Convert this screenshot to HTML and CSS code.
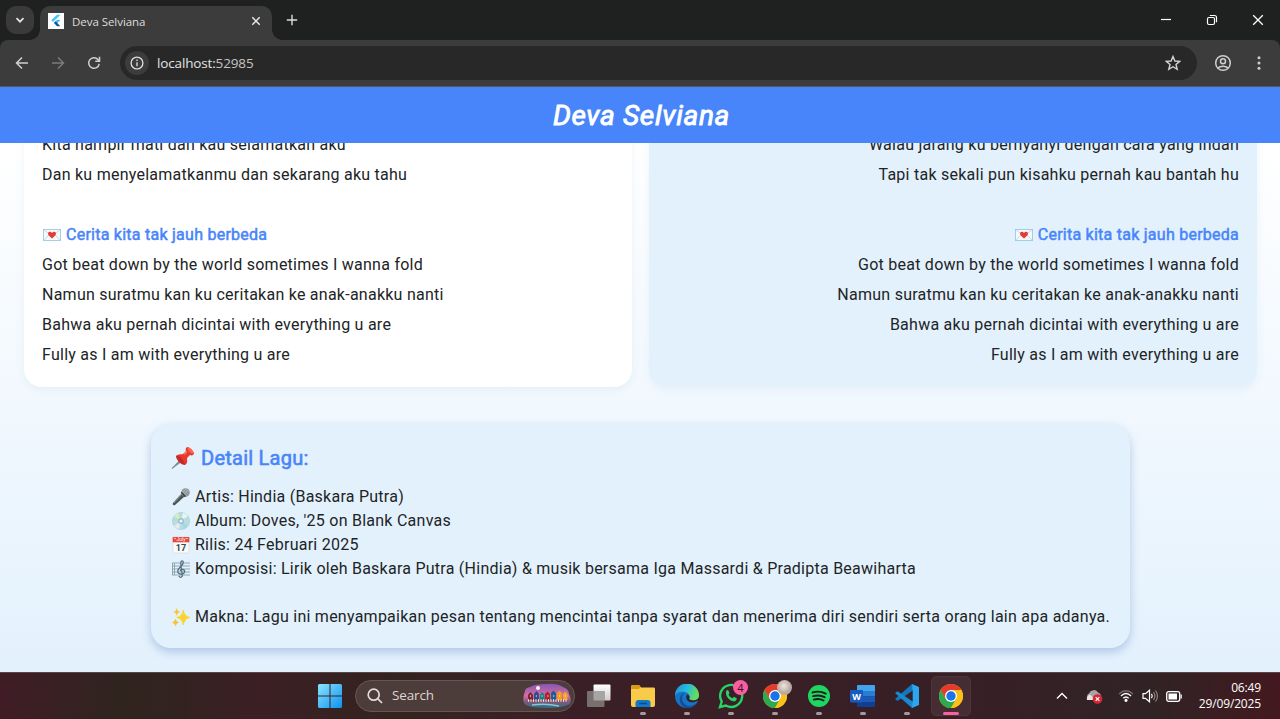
FILE: index.html
```html
<!DOCTYPE html>
<html lang="id">
<head>
<meta charset="utf-8">
<title>Deva Selviana</title>
<link rel="stylesheet" href="styles.css">
</head>
<body>
<svg class="defs" width="0" height="0" aria-hidden="true">
  <symbol id="chrome" viewBox="0 0 24 24">
    <circle cx="12" cy="12" r="12" fill="#fbc116"/>
    <path d="M1.600 6A12 12 0 0 0 12 24L17.200 15L12 12L6.800 15z" fill="#2da94f"/>
    <path d="M12 6H22.400A12 12 0 0 1 12 24L17.200 15z" fill="#fbc116"/>
    <path d="M1.600 6L6.800 15L12 12V6H22.400A12 12 0 0 0 1.600 6z" fill="#e33b2e"/>
    <circle cx="12" cy="12" r="6" fill="#fff"/>
    <circle cx="12" cy="12" r="4.700" fill="#1a73e8"/>
  </symbol>
  <symbol id="letter" viewBox="0 0 18 12">
    <rect x=".4" y=".4" width="17.200" height="11.200" fill="#f5f9fb" stroke="#8fc5e0" stroke-width=".8"/>
    <path d="M.5 .5L9 7l8.500-6.500M.5 11.500L6.500 5.500M17.500 11.500L11.500 5.500" fill="none" stroke="#b5cdd8" stroke-width=".7"/>
    <path d="M9 9.500C6.500 7.500 5 6.200 5 4.600C5 2.600 7.800 2 9 4C10.200 2 13 2.600 13 4.600C13 6.200 11.500 7.500 9 9.500z" fill="#e53b35"/>
  </symbol>
</svg>
<div class="window">
  <header class="tabstrip">
    <button class="tab-search"><svg width="12" height="12" viewBox="0 0 12 12"><path d="M2.500 4.200L6 7.700L9.500 4.200" fill="none" stroke="#e3e3e3" stroke-width="1.700"/></svg></button>
    <div class="tab">
      <svg class="favicon" width="16" height="16" viewBox="0 0 16 16"><rect width="16" height="16" fill="#fff"/><path d="M9 1.700h3.500L5 9L3.300 7.300z" fill="#45c5f8"/><path d="M9 7h3.500L9.700 9.800L8 11.500L6 9.800z" fill="#45b8f5"/><path d="M6 9.900l1.700-1.600l4.600 5H9z" fill="#0b5a9d"/></svg>
      <span class="tab-title">Deva Selviana</span>
      <svg class="tab-close" width="10" height="10" viewBox="0 0 10 10"><path d="M1.300 1.300l7.400 7.400M8.700 1.300L1.300 8.700" stroke="#e8e8e8" stroke-width="1.500"/></svg>
    </div>
    <svg class="new-tab" width="12" height="12" viewBox="0 0 12 12"><path d="M6 .8v10.400M.8 6h10.400" stroke="#dcdcdc" stroke-width="1.400"/></svg>
    <div class="controls">
      <svg width="12" height="12" viewBox="0 0 12 12"><path d="M1 5.500h10" stroke="#fff" stroke-width="1.200"/></svg>
      <svg width="12" height="12" viewBox="0 0 12 12"><rect x="1.500" y="3.500" width="7" height="7" rx="1.500" fill="none" stroke="#fff" stroke-width="1.200"/><path d="M3.800 1.500H8.500a2 2 0 0 1 2 2V8.200" fill="none" stroke="#fff" stroke-width="1.200"/></svg>
      <svg width="12" height="12" viewBox="0 0 12 12"><path d="M1.200 1.200l9.600 9.600M10.800 1.200L1.200 10.800" stroke="#fff" stroke-width="1.300"/></svg>
    </div>
  </header>
  <nav class="toolbar">
    <svg width="14" height="14" viewBox="0 0 14 14" fill="none" stroke="#d0d0d0" stroke-width="1.500"><path d="M13 7H2M7 1.500L1.500 7L7 12.500"/></svg>
    <svg width="14" height="14" viewBox="0 0 14 14" fill="none" stroke="#7b7b7b" stroke-width="1.500"><path d="M1 7h11M7 1.500L12.500 7L7 12.500"/></svg>
    <svg width="14" height="14" viewBox="0 0 14 14" fill="none" stroke="#d0d0d0" stroke-width="1.500"><path d="M12.200 7.800A5.300 5.300 0 1 1 11 3.500L12.500 5M12.500 .8V5.200H8.200"/></svg>
    <div class="omnibox">
      <span class="info"><svg width="14" height="14" viewBox="0 0 14 14"><circle cx="7" cy="7" r="5.900" fill="none" stroke="#e0e0e0" stroke-width="1.300"/><path d="M7 6.200V10.200M7 3.600V5" stroke="#e0e0e0" stroke-width="1.300"/></svg></span>
      <span class="url">localhost:<span class="port">52985</span></span>
      <svg class="star" width="16" height="16" viewBox="0 0 16 16"><path d="M8 1.500L9.900 6L14.800 6.300L11 9.500L12.200 14.300L8 11.700L3.800 14.300L5 9.500L1.200 6.300L6.100 6z" fill="none" stroke="#d5d5d5" stroke-width="1.400"/></svg>
    </div>
    <svg class="profile" width="18" height="18" viewBox="0 0 18 18" fill="none" stroke="#cfcfcf" stroke-width="1.500"><circle cx="9" cy="9" r="7.300"/><circle cx="9" cy="7.300" r="2.500"/><path d="M4 14C6.300 11.500 11.700 11.500 14 14"/></svg>
    <svg class="kebab" width="4" height="14" viewBox="0 0 4 14" fill="#cfcfcf"><circle cx="2" cy="1.700" r="1.500"/><circle cx="2" cy="7" r="1.500"/><circle cx="2" cy="12.300" r="1.500"/></svg>
  </nav>
  <div class="appbar"><h1>Deva Selviana</h1></div>
  <main class="content">
    <div class="lyrics">
      <section class="card">
        <p>Kita hampir mati dan kau selamatkan aku</p>
        <p>Dan ku menyelamatkanmu dan sekarang aku tahu</p>
        <h2><svg width="18" height="12"><use href="#letter"/></svg><span>Cerita kita tak jauh berbeda</span></h2>
        <p>Got beat down by the world sometimes I wanna fold</p>
        <p>Namun suratmu kan ku ceritakan ke anak-anakku nanti</p>
        <p>Bahwa aku pernah dicintai with everything u are</p>
        <p>Fully as I am with everything u are</p>
      </section>
      <section class="card card-right">
        <p>Walau jarang ku bernyanyi dengan cara yang indah</p>
        <p>Tapi tak sekali pun kisahku pernah kau bantah hu</p>
        <h2><svg width="18" height="12"><use href="#letter"/></svg><span>Cerita kita tak jauh berbeda</span></h2>
        <p>Got beat down by the world sometimes I wanna fold</p>
        <p>Namun suratmu kan ku ceritakan ke anak-anakku nanti</p>
        <p>Bahwa aku pernah dicintai with everything u are</p>
        <p>Fully as I am with everything u are</p>
      </section>
    </div>
    <section class="detail">
      <h3><svg width="24" height="24" viewBox="0 0 24 24"><path d="M9 14L1 22.500L10.500 15.500z" fill="#78909c" stroke="#78909c"/><path d="M5 10C8 7.500 10 8.500 12 8L15 5C14 3 15 1 17 1L23 7C23 9 21 10 19 9L16 12C16 15 17 17 14 19z" fill="#e8392c"/><path d="M5 10C8 9 13 13 14 19C10 19 5 14 5 10z" fill="#c62828"/><path d="M17 1C15 3 20 9 23 7C22 4 20 2 17 1z" fill="#ff6450"/><path d="M13 8.500L16 5.500" stroke="#ff7a66" stroke-width="1.500"/></svg><span>Detail Lagu:</span></h3>
      <p><svg width="20" height="20" viewBox="0 0 20 20"><path d="M10.500 6.500L13.500 9.500L4 18C2.500 19 1 17.500 2 16z" fill="#4b5357"/><path d="M11 7L3 16" stroke="#89949a"/><circle cx="14.500" cy="5.500" r="4.300" fill="#89949a"/><path d="M12 2.500L18 8M14 1.500L18.500 5.500M11 4L16 9.500M12 8L17.500 2.500M11 6L15.500 1.500" stroke="#bec7cb" stroke-width=".5"/><path d="M10.300 5.300L14.500 9.800" stroke="#313a3e" stroke-width="1.300"/></svg><span>Artis: Hindia (Baskara Putra)</span></p>
      <p><svg width="20" height="20" viewBox="0 0 20 20"><circle cx="10" cy="10" r="8.600" fill="#b7dce2" stroke="#9ac2cb" stroke-width=".5"/><path d="M10 10L3 5A8.600 8.600 0 0 1 7 2z" fill="#d9efb6"/><path d="M10 10L12 1.700A8.600 8.600 0 0 1 17 5z" fill="#e6f4f5"/><path d="M10 10L17 15A8.600 8.600 0 0 1 13 18z" fill="#a2d7e9"/><path d="M10 10L8 18A8.600 8.600 0 0 1 3 15z" fill="#e4ecec"/><circle cx="10" cy="10" r="3" fill="#9cbfca"/><circle cx="10" cy="10" r="1.500" fill="#edf7fb"/></svg><span>Album: Doves, '25 on Blank Canvas</span></p>
      <p><svg width="20" height="20" viewBox="0 0 20 20"><rect x="2" y="2" width="16" height="16" rx=".8" fill="#fafafa" stroke="#d2d7da" stroke-width=".6"/><path d="M1.700 2h16.600v5.300H1.700z" fill="#e8463d"/><circle cx="4" cy="3.500" r=".7" fill="#fff"/><circle cx="16" cy="3.500" r=".7" fill="#fff"/><text class="cal-month" x="10" y="6.300">July</text><text class="cal-day" x="10" y="15.800">17</text></svg><span>Rilis: 24 Februari 2025</span></p>
      <p><svg width="20" height="20" viewBox="0 0 20 20"><path d="M1 4h18M1 7h18M1 10h18M1 13h18M1 16h18M1.500 4v12M3.500 4v12" stroke="#86a0ad" stroke-width=".9" fill="none"/><path d="M8 16.800C8.500 19.200 11.800 18.500 11.300 16L9.700 4.500C9.500 1.500 12.300 1 12.300 3.500C12.300 7 6.800 8.200 6.800 12.300C6.800 16 13.600 16 13.600 12.500C13.600 9.700 9.500 9.700 9.300 12.300" stroke="#506e7c" stroke-width="1.200" fill="none"/></svg><span>Komposisi: Lirik oleh Baskara Putra (Hindia) &amp; musik bersama Iga Massardi &amp; Pradipta Beawiharta</span></p>
      <p class="meaning"><svg width="20" height="20" viewBox="0 0 20 20"><path d="M12.300 3Q13.200 9.500 19 10.500Q13.200 11.500 12.300 18Q11.400 11.500 5.600 10.500Q11.400 9.500 12.300 3z" fill="#fdd332" stroke="#fdd332" stroke-width=".8"/><path d="M5.700 1.500Q6 4.600 9 5Q6 5.400 5.700 8.500Q5.400 5.400 2.500 5Q5.400 4.600 5.700 1.500zM4.500 12Q5 15 7.500 15.500Q5 16 4.500 19Q4 16 1.500 15.500Q4 15 4.500 12z" fill="#f9c22b" stroke="#f9c22b" stroke-width=".4"/></svg><span>Makna: Lagu ini menyampaikan pesan tentang mencintai tanpa syarat dan menerima diri sendiri serta orang lain apa adanya.</span></p>
    </section>
  </main>
  <footer class="taskbar">
    <div class="dock">
      <div class="slot start"><svg width="24" height="24" viewBox="0 0 24 24"><defs><linearGradient id="win" x1="0" y1="0" x2="1" y2="1"><stop offset="0" stop-color="#8be3ff"/><stop offset="1" stop-color="#0c93ee"/></linearGradient></defs><path d="M0 1.500Q0 0 1.500 0H11.500V11.500H0zM12.500 0H22.500Q24 0 24 1.500V11.500H12.500zM0 12.500H11.500V24H1.500Q0 24 0 22.500zM12.500 12.500H24V22.500Q24 24 22.500 24H12.500z" fill="url(#win)"/></svg></div>
      <div class="search">
        <svg width="16" height="16" viewBox="0 0 16 16" fill="none" stroke="#e2dcdc" stroke-width="1.700"><circle cx="6.700" cy="6.700" r="5.500"/><path d="M10.700 10.700L15 15"/></svg>
        <span>Search</span>
        <svg class="promo" width="48" height="26" viewBox="0 0 48 26"><defs><linearGradient id="sky" x1="0" y1="0" x2="0" y2="1"><stop offset="0" stop-color="#8556b5"/><stop offset=".5" stop-color="#d76fa0"/><stop offset=".75" stop-color="#7c5a78"/><stop offset="1" stop-color="#2a6f8d"/></linearGradient></defs><path d="M2 8Q2 5 7 4Q12 1 22 1Q34 0 40 4Q46 6 46 11Q50 20 45 22Q38 25 24 25Q8 25 3 22Q-2 19 2 8z" fill="url(#sky)"/><circle cx="15" cy="5" r="2" fill="#fff2df"/><path d="M5 12l2.500-3l2.500 3v5H5z" fill="#7d2340"/><path d="M11 11l2.500-3l2.500 3v6h-5z" fill="#254f8e"/><path d="M17 12l2-3l2.500 3v5H17z" fill="#197e8e"/><path d="M22 11l2.500-2.500L27 11v6h-5z" fill="#a82436"/><path d="M28 10l2.500-2.500L33 10v7h-5z" fill="#1f5d99"/><path d="M34 10l2.500-2.500L39 10v7h-5z" fill="#f39a22"/><path d="M40 11l2-2.500l2.500 2.500v6H40z" fill="#f0a52c"/><path d="M5 17.500h39" stroke="#ffe8c4" stroke-width="2.500" stroke-dasharray="1 1.500"/><path d="M7 13h38" stroke="#ffd98e" stroke-width="1.500" stroke-dasharray="1 4.800"/><path d="M9 22Q23 20 36 23" stroke="#83cad2" stroke-width="1.500" fill="none"/></svg>
      </div>
      <div class="slot"><svg width="26" height="26" viewBox="0 0 26 26"><defs><linearGradient id="tv" x1="0" y1="0" x2="0" y2="1"><stop offset="0" stop-color="#fff"/><stop offset="1" stop-color="#cfcccc"/></linearGradient></defs><rect x="7.500" y="1.500" width="17" height="16" rx="1" fill="url(#tv)"/><rect x="1" y="8" width="17.500" height="16" rx="1" fill="#77706f"/><path d="M7.500 8h11v9.500h-11z" fill="#a8a4a3"/></svg></div>
      <div class="slot running"><svg width="26" height="24" viewBox="0 0 26 24"><path d="M1 3Q1 1 3 1H9L11 3.500H24Q25 3.500 25 5V21Q25 23 23 23H3Q1 23 1 21z" fill="#f9cb4b"/><path d="M1 5V3Q1 1 3 1H8.500Q10 1 10.500 3L9 5z" fill="#d99b15"/><path d="M5.500 23V19Q5.500 16 8.500 16H17.500Q20.500 16 20.500 19V23z" fill="#1179c8"/><path d="M9 19.500h8" stroke="#0b4c82" stroke-width="1.500"/></svg></div>
      <div class="slot running"><svg width="24" height="24" viewBox="0 0 24 24"><defs><linearGradient id="edge" x1="0" y1="0" x2="1" y2=".3"><stop offset="0" stop-color="#2488dd"/><stop offset=".55" stop-color="#27bddd"/><stop offset="1" stop-color="#67dc56"/></linearGradient></defs><circle cx="12" cy="12" r="12" fill="#1674c4"/><path d="M0 12A12 12 0 0 1 24 11C24.500 17 17 17.500 14 15C15.800 13 14.500 9 10 8C5 7 1 9 0 12z" fill="url(#edge)"/><path d="M10 8.500C6 11 6 18 11 21C14 23 18 22 21 19.500A12 12 0 0 1 10 23.800C2 20 4 10 10 8.500z" fill="#134f98"/><path d="M12.500 10.500C10 12.500 11.500 17.500 16 18.300C19 18.500 21 17.500 22.500 16.800L24.500 17V12C23 17 17 17.500 14 15C15 13.500 14.500 11.500 12.500 10.500z" fill="#351f27"/></svg></div>
      <div class="slot running"><svg width="26" height="26" viewBox="0 0 26 26"><path d="M2 24L3.700 18.500A11 11 0 1 1 7.800 22.500z" fill="none" stroke="#27d366" stroke-width="2.400"/><path d="M8.200 8C9 6.500 10.300 7 10.600 8L11.500 10.200L10.500 11.700Q11.800 14.200 14.500 15.200L16 13.800L18.700 15.200C19 17.500 17 18.800 15 18.300C10.500 17 7 12.500 8.200 8z" fill="#27d366"/></svg><span class="badge">4</span></div>
      <div class="slot running"><svg width="24" height="24"><use href="#chrome"/></svg><span class="avatar"></span></div>
      <div class="slot running"><svg width="22" height="22" viewBox="0 0 22 22"><circle cx="11" cy="11" r="11" fill="#1ed760"/><path d="M4.500 7.500Q11.500 5.300 17.700 8.700M5.200 11.200Q11.300 9.300 16.600 12.200M5.800 14.600Q11 13 15.500 15.500" fill="none" stroke="#201c1c" stroke-width="1.900" stroke-linecap="round"/></svg></div>
      <div class="slot running"><svg width="26" height="24" viewBox="0 0 26 24"><path d="M7 2Q7 1 8 1H24Q25 1 25 2V7H7z" fill="#41a5ee"/><path d="M7 7h18v5.500H7z" fill="#2b7cd3"/><path d="M7 12.500h18V18H7z" fill="#185abd"/><path d="M7 18h18v4Q25 23 24 23H8Q7 23 7 22z" fill="#103f91"/><rect x="0" y="6" width="13" height="12.500" rx="1" fill="#185abd"/><text class="word-letter" x="6.500" y="15.600">W</text></svg></div>
      <div class="slot running"><svg width="24" height="24" viewBox="0 0 24 24"><path d="M17 0L20 5L2.500 17L0 15L17 0z" fill="#1178c0"/><path d="M0 9L2.500 7.200L20 19L17 24L0 9z" fill="#168ad4"/><path d="M17 0L24 3V21L17 24L17.700 17.500V6.500z" fill="#2ca6ef"/></svg></div>
      <div class="slot running active"><svg width="24" height="24"><use href="#chrome"/></svg></div>
    </div>
    <div class="tray">
      <svg width="12" height="8" viewBox="0 0 12 8"><path d="M1 6.500L6 1.500L11 6.500" fill="none" stroke="#fff" stroke-width="1.400"/></svg>
      <svg class="cloud" width="17" height="15" viewBox="0 0 17 15"><path d="M3.500 11A3.500 3.500 0 0 1 3 4.500A5 5 0 0 1 12 3.500A4 4 0 0 1 13 11z" fill="#a9a4a4"/><path d="M1 11Q0 7 4 5.500L9 11z" fill="#e8e5e5"/><circle cx="11.500" cy="10" r="4.800" fill="#d92632"/><path d="M9.700 8.200l3.600 3.600M13.300 8.200L9.700 11.800" stroke="#fff" stroke-width="1.200"/></svg>
      <svg class="wifi" width="16" height="12" viewBox="0 0 16 12" fill="none" stroke="#fff" stroke-width="1.400"><path d="M1 4Q8-2.500 15 4" stroke="#75696a"/><path d="M3 6Q8 1 13 6M5.300 8.300Q8 5.700 10.700 8.300"/><circle cx="8" cy="10.300" r=".9" fill="#fff"/></svg>
      <svg class="volume" width="17" height="14" viewBox="0 0 17 14" fill="none" stroke="#fff" stroke-width="1.200"><path d="M1 4.700H3.500L7.500 1.200V12.800L3.500 9.300H1z"/><path d="M9.500 4.800Q11 7 9.500 9.200"/><path d="M11.500 3Q14.300 7 11.500 11M13.500 1.500Q17.500 7 13.500 12.500" stroke="#8b7e7f"/></svg>
      <svg class="battery" width="17" height="11" viewBox="0 0 17 11"><rect x=".7" y=".7" width="13" height="9.600" rx="2" fill="none" stroke="#fff" stroke-width="1.300"/><path d="M2.500 2.500h8.500v6h-8.500zM14.500 3.500h1.300v4h-1.300z" fill="#fff"/></svg>
      <div class="clock"><span>06:49</span><span>29/09/2025</span></div>
    </div>
  </footer>
</div>
</body>
</html>
```
FILE: styles.css
```css
* { box-sizing: border-box; }
body { margin: 0; font-family: Roboto, "Liberation Sans", sans-serif; }
h1, h2, h3, p { margin: 0; font-weight: 400; }
svg { display: block; flex: none; }
.defs { position: absolute; }
.window { width: 1280px; height: 719px; display: flex; flex-direction: column; overflow: hidden; }

.tabstrip { height: 40px; flex: none; display: flex; align-items: center; background: #1f2121; padding-left: 6px; }
.tab-search { width: 28px; height: 28px; border: 0; border-radius: 10px; background: #3a3a3a; display: grid; place-items: center; padding: 0; }
.tab { width: 232px; height: 34px; margin: 6px 0 0 6px; padding: 0 11px 5px 8px; display: flex; align-items: center; background: #3c3c3c; border-radius: 10px 10px 0 0; position: relative; }
.tab::before, .tab::after { content: ""; position: absolute; bottom: 0; width: 10px; height: 10px; }
.tab::before { left: -10px; background: radial-gradient(circle at 0 0, transparent 9.500px, #3c3c3c 10px); }
.tab::after { right: -10px; background: radial-gradient(circle at 100% 0, transparent 9.500px, #3c3c3c 10px); }
.tab-title { font: 11.500px "Open Sans", "Noto Sans", sans-serif; letter-spacing: -.05px; color: #dedede; margin: 1px 0 0 8px; }
.tab-close { margin-left: auto; }
.new-tab { margin-left: 14px; }
.controls { display: flex; gap: 34px; margin-left: auto; padding-right: 16px; }

.toolbar { height: 47px; flex: none; display: flex; align-items: center; background: #3c3c3c; border-bottom: 1px solid #4b5a70; border-radius: 8px 8px 0 0; padding-left: 15px; gap: 22px; box-shadow: 0 -8px 0 #1f2121; clip-path: inset(0); }
.omnibox { width: 1077px; height: 34px; border-radius: 17px; background: #282828; display: flex; align-items: center; padding: 0 16px 0 5px; margin-left: -3px; }
.info { width: 24px; height: 24px; border-radius: 50%; background: #3c3c3c; display: grid; place-items: center; }
.url { font: 13.500px "Open Sans", "Noto Sans", sans-serif; letter-spacing: -.15px; color: #e3e3e3; margin: -1px 0 0 8px; }
.port { color: #c4c4c4; }
.star { margin-left: auto; }
.profile { margin-left: -5px; }
.kebab { margin-left: 3px; }

.appbar { height: 56px; flex: none; display: grid; place-items: center; background: #4885fa; z-index: 1; }
.appbar h1 { font-size: 28px; font-style: italic; color: #fff; letter-spacing: .7px; -webkit-text-stroke: .9px #fff; padding-left: 3px; }

.content { height: 529px; flex: none; overflow: hidden; display: flex; flex-direction: column; justify-content: flex-end; align-items: center; gap: 37px; padding: 0 23px 24px 24px; background: linear-gradient(#fff, #e3f1fd); }
.lyrics { display: grid; grid-template-columns: 1fr 1fr; gap: 17px; align-self: stretch; }
.card { background: #fff; border-radius: 18px; padding: 18px 18px 17px; box-shadow: 0 3px 10px rgba(80, 130, 180, .08); }
.card-right { background: #e3f1fc; text-align: right; }
.card p { font-size: 16px; line-height: 30px; letter-spacing: .25px; color: #212426; }
.card h2 { display: flex; align-items: center; gap: 5px; font-size: 16px; line-height: 30px; margin-top: 30px; color: #4885fa; -webkit-text-stroke: .5px #4885fa; letter-spacing: .25px; }
.card h2 svg { margin-left: 1px; }
.card-right h2 { justify-content: flex-end; }
.detail { width: 979px; background: #e3f1fc; border-radius: 20px; padding: 20px 20px 19px; box-shadow: 0 4px 10px rgba(72, 115, 190, .34); }
.detail h3 { display: flex; align-items: center; gap: 6px; height: 28px; margin-bottom: 13px; font-size: 20px; letter-spacing: .25px; color: #4885fa; -webkit-text-stroke: .6px #4885fa; }
.detail p { display: flex; align-items: center; gap: 4px; font-size: 16px; line-height: 24px; letter-spacing: .25px; white-space: nowrap; color: #212426; }
.detail .meaning { margin-top: 24px; }
.cal-month { font: 5px Roboto, sans-serif; fill: #fff; text-anchor: middle; letter-spacing: 0; }
.cal-day { font: bold 9px Roboto, sans-serif; fill: #37474f; text-anchor: middle; letter-spacing: 0; }

.taskbar { height: 47px; flex: none; display: flex; justify-content: space-between; border-top: 1px solid #5b4548; padding: 0 19px 0 308px; background: linear-gradient(90deg, #401c26 0, #30241f 9%, #32231f 14%, #3c1f25 20%, #33241f 31%, #3b1f27 45%, #371f26 75%, #302325 90%, #43191f 100%); color: #fff; font-family: "Open Sans", "Noto Sans", sans-serif; }
.dock { display: flex; align-items: center; height: 46px; }
.slot { width: 44px; height: 46px; display: grid; place-items: center; position: relative; }
.slot.start { margin-right: 3px; }
.running::after { content: ""; position: absolute; left: 19px; bottom: 4px; width: 6px; height: 3px; border-radius: 2px; background: #a79a9c; }
.active::before { content: ""; position: absolute; inset: 3px 2px; border-radius: 5px; background: #462d33; border: 1px solid #4d353b; }
.active svg { position: relative; }
.active::after { left: 14px; width: 16px; background: #f5639f; }
.word-letter { font: bold 9px "Open Sans", sans-serif; fill: #fff; text-anchor: middle; }
.search { width: 220px; height: 32px; border-radius: 16px; margin-right: 2px; display: flex; align-items: center; background: #4c3c3a; border: 1px solid #675554; padding: 0 3px 0 11px; }
.search span { font-size: 13.500px; letter-spacing: -.15px; margin: -2px 0 0 9px; color: #ded6d5; }
.promo { margin-left: auto; }
.badge, .avatar { position: absolute; top: 7px; left: 24px; width: 15px; height: 15px; border-radius: 50%; }
.badge { background: #fb5da0; color: #2b1720; font-size: 11px; line-height: 15px; text-align: center; }
.avatar { background: radial-gradient(circle at 45% 40%, #eee6dd, #b5a59d 60%, #d4ccc8); }
.tray { display: flex; align-items: center; height: 46px; }
.cloud { margin-left: 18px; }
.wifi { margin-left: 15px; }
.volume { margin-left: 8px; }
.battery { margin-left: 7px; }
.clock { display: flex; flex-direction: column; align-items: flex-end; width: 78px; font-size: 12px; line-height: 15.500px; letter-spacing: -.15px; padding-bottom: 1px; }
```
